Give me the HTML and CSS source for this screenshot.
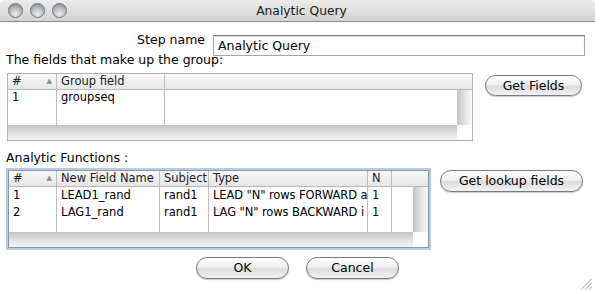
FILE: index.html
```html
<!DOCTYPE html>
<html>
<head>
	<meta charset="utf-8">
	<title>Analytic Query</title>
	<link rel="stylesheet" href="styles.css">
</head>
<body>
	<div class="window">
		<div class="titlebar">
			<div class="lights">
				<span class="light"></span>
				<span class="light"></span>
				<span class="light"></span>
			</div>
			<div class="title">Analytic Query</div>
		</div>

		<div class="content">
			<div class="step-row">
				<label class="step-label">Step name</label>
				<div class="step-input">Analytic Query</div>
			</div>
			<div class="group-label">The fields that make up the group:</div>

			<div class="group-row">
				<div class="grid group-grid">
					<div class="grid-head">
						<div class="hcell col-num">#<span class="sort">&#9650;</span></div>
						<div class="hcell col-gfield">Group field</div>
						<div class="hcell col-fill"></div>
					</div>
					<div class="grid-body">
						<div class="rows">
							<div class="row">
								<div class="cell col-num">1</div>
								<div class="cell col-gfield">groupseq</div>
								<div class="cell col-fill"></div>
							</div>
							<div class="row row-empty">
								<div class="cell col-num"></div>
								<div class="cell col-gfield"></div>
								<div class="cell col-fill"></div>
							</div>
						</div>
						<div class="vscroll"></div>
					</div>
					<div class="grid-foot">
						<div class="hscroll"></div>
						<div class="corner"></div>
					</div>
				</div>
				<button class="aqua btn-fields">Get Fields</button>
			</div>

			<div class="func-label">Analytic Functions :</div>

			<div class="func-row">
				<div class="grid func-grid">
					<div class="grid-head">
						<div class="hcell col-num2">#<span class="sort">&#9650;</span></div>
						<div class="hcell col-name">New Field Name</div>
						<div class="hcell col-subj">Subject</div>
						<div class="hcell col-type">Type</div>
						<div class="hcell col-n">N</div>
						<div class="hcell col-fill"></div>
					</div>
					<div class="grid-body">
						<div class="rows">
							<div class="row">
								<div class="cell col-num2">1</div>
								<div class="cell col-name">LEAD1_rand</div>
								<div class="cell col-subj">rand1</div>
								<div class="cell col-type">LEAD "N" rows FORWARD a</div>
								<div class="cell col-n">1</div>
								<div class="cell col-fill"></div>
							</div>
							<div class="row">
								<div class="cell col-num2">2</div>
								<div class="cell col-name">LAG1_rand</div>
								<div class="cell col-subj">rand1</div>
								<div class="cell col-type">LAG "N" rows BACKWARD i</div>
								<div class="cell col-n">1</div>
								<div class="cell col-fill"></div>
							</div>
							<div class="row row-empty">
								<div class="cell col-num2"></div>
								<div class="cell col-name"></div>
								<div class="cell col-subj"></div>
								<div class="cell col-type"></div>
								<div class="cell col-n"></div>
								<div class="cell col-fill"></div>
							</div>
						</div>
						<div class="vscroll"></div>
					</div>
					<div class="grid-foot">
						<div class="hscroll"></div>
						<div class="corner"></div>
					</div>
				</div>
				<button class="aqua btn-lookup">Get lookup fields</button>
			</div>

			<div class="button-row">
				<button class="aqua btn-ok">OK</button>
				<button class="aqua btn-cancel">Cancel</button>
			</div>
		</div>

		<svg class="grip" width="12" height="12" viewBox="0 0 12 12">
			<line x1="11.5" y1="1" x2="1" y2="11.5" stroke="#a0a0a0" stroke-width="1"/>
			<line x1="11.5" y1="5" x2="5" y2="11.5" stroke="#a0a0a0" stroke-width="1"/>
			<line x1="11.5" y1="9" x2="9" y2="11.5" stroke="#a0a0a0" stroke-width="1"/>
		</svg>
	</div>
</body>
</html>
```

FILE: styles.css
```css
html, body {
	margin: 0;
	padding: 0;
	background: #ffffff;
}
body {
	font-family: "DejaVu Sans", "Liberation Sans", sans-serif;
	font-size: 12.5px;
	color: #000;
}
.window {
	position: relative;
	width: 595px;
	height: 290px;
	overflow: hidden;
	background: #ffffff;
}

/* title bar */
.titlebar {
	height: 21px;
	border-bottom: 1px solid #8c8c8c;
	border-radius: 5px 5px 0 0;
	background: linear-gradient(#ececec, #d2d2d2);
	display: flex;
	align-items: center;
}
.lights {
	display: flex;
	gap: 7px;
	padding-left: 8px;
	width: 120px;
}
.light {
	width: 13px;
	height: 13px;
	border-radius: 50%;
	border: 1px solid #757575;
	background: radial-gradient(circle at 50% 78%, #eef0f2 0%, #b2b8be 55%, #737a80 100%);
}
.title {
	flex: 1;
	text-align: center;
	margin-right: 120px;
	font-size: 12.3px;
	color: #1a1a1a;
}

.content {
	padding-left: 6px;
}

/* step name */
.step-row {
	display: flex;
	align-items: flex-start;
	margin-top: 13px;
	height: 21px;
}
.step-label {
	width: 199px;
	text-align: right;
	padding-right: 8px;
	line-height: 16px;
	margin-top: -3px;
}
.step-input {
	width: 366px;
	height: 19px;
	line-height: 19px;
	border: 1px solid #a4a4a4;
	border-top-color: #7c7c7c;
	box-shadow: inset 0 1px 1px #d8d8d8;
	padding-left: 4px;
}
.group-label {
	margin-top: -4px;
	line-height: 16px;
}

/* grids */
.group-row, .func-row {
	display: flex;
	align-items: flex-start;
}
.group-row {
	margin-top: 5px;
}
.grid {
	border: 1px solid #b4b4b4;
	display: flex;
	flex-direction: column;
	font-size: 11.5px;
	background: #fff;
}
.grid-head {
	display: flex;
	height: 15px;
	border-bottom: 1px solid #b8b8b8;
	background: linear-gradient(#f8f8f8, #e6e6e6);
}
.hcell, .cell {
	border-right: 1px solid #bdbdbd;
	padding-left: 4px;
	box-sizing: border-box;
	white-space: nowrap;
	overflow: hidden;
}
.hcell {
	line-height: 15px;
	position: relative;
	color: #222;
}
.sort {
	position: absolute;
	right: 4px;
	top: 0;
	font-size: 7px;
	color: #8a8a8a;
}
.col-fill {
	flex: 1;
	border-right: none;
}
.grid-body {
	display: flex;
	flex: 1;
}
.rows {
	flex: 1;
	display: flex;
	flex-direction: column;
}
.row {
	display: flex;
}
.row-empty {
	flex: 1;
}
.vscroll {
	width: 15px;
	background: linear-gradient(to right, #c4c4c4, #e8e8e8 60%, #fafafa);
}
.grid-foot {
	display: flex;
	height: 15px;
}
.hscroll {
	flex: 1;
	background: linear-gradient(#c2c2c2, #e6e6e6 60%, #f6f6f6);
}
.corner {
	width: 15px;
	background: #fff;
}

.group-grid {
	margin-left: 1px;
	width: 464px;
	height: 66px;
}
.group-grid .row {
	height: 16px;
	line-height: 15px;
}
.group-grid .row-empty {
	height: auto;
}
.col-num {
	width: 49px;
}
.col-gfield {
	width: 108px;
}

.func-label {
	margin-top: 9px;
	line-height: 16px;
}
.func-row {
	margin-top: 4px;
}
.func-grid {
	margin-left: 2px;
	width: 419px;
	height: 76px;
	border-color: #8497ad;
	box-shadow: 0 0 0 2px #bccbdc;
}
.func-grid .row {
	height: 17px;
	line-height: 17px;
}
.func-grid .row-empty {
	height: auto;
}
.func-grid .hscroll {
	background: linear-gradient(#c4c4c4, #e4e4e4 60%, #f4f4f4);
}
.col-num2 {
	width: 48px;
}
.col-name {
	width: 103px;
}
.col-subj {
	width: 49px;
}
.col-type {
	width: 159px;
	letter-spacing: -0.1px;
}
.col-n {
	width: 24px;
}

/* aqua buttons */
.aqua {
	font-family: "DejaVu Sans", "Liberation Sans", sans-serif;
	font-size: 12.5px;
	color: #000;
	height: 21px;
	padding: 0;
	border: 1px solid #7a7a7a;
	border-radius: 11px;
	background: linear-gradient(#ffffff, #f0f0f0 45%, #dcdcdc 55%, #f2f2f2);
	box-shadow: 0 1px 1px #c8c8c8;
	line-height: 18px;
}
.btn-fields {
	margin-left: 12px;
	margin-top: 2px;
	width: 97px;
}
.btn-lookup {
	margin-left: 11px;
	width: 143px;
	height: 22px;
}
.button-row {
	display: flex;
	justify-content: center;
	gap: 17px;
	margin-top: 9px;
	margin-left: -6px;
}
.btn-ok, .btn-cancel {
	width: 93px;
	height: 22px;
}

.grip {
	position: absolute;
	right: 3px;
	bottom: 0;
}
```
